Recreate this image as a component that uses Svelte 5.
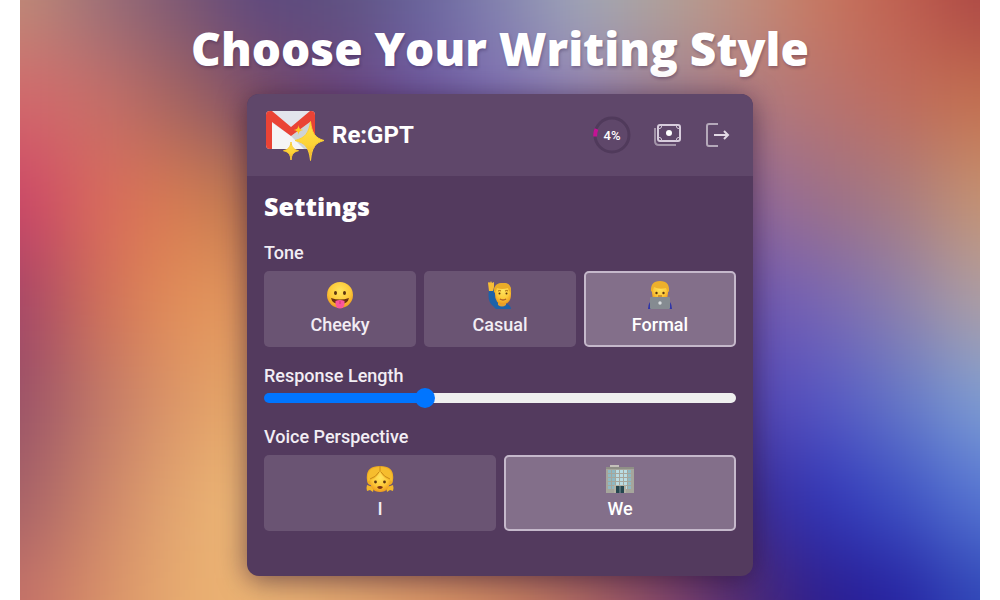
<script>
  // Colour field behind the card: one row of stops per 100 units of height.
  const field = [
    'c08c78 9c7078 7c5874 5c4880 5e5280 68649c 8484b0 a0a8b8 b0a49c c09080 c87860 c06050 ac4644',
    'd4686c c87068 a46460 7c4c68 6c4480 7058a0 8070b4 9484b4 a07e90 b07c80 b87470 c06c5c c4704e',
    'cc4468 da6a5c d87c50 b87850 805070 70509c 7060b0 8068ac 806890 9068a0 9c7088 a87c80 c89470',
    'a44468 d07058 e49058 e09860 a06858 805070 705090 705090 705090 6c54b0 7866b4 8c80ac b0a0a4',
    '985068 c07868 de9868 e8ac68 c08860 a07060 906068 805070 604880 5444b0 5656c4 6478c8 80a0d4',
    'a46068 cc8468 e4a870 f0bc78 dca068 cc8860 b07060 986068 784870 3c2c90 3034b8 3c50c4 5878d4',
    'c47068 d89068 e8ac70 ecb474 e4a870 dc9868 cc8460 b06860 884868 542c70 2c1c8c 2420a0 3048b8'
  ].map((row) => row.split(' '));

  const cells = [];
  for (let r = -1; r <= field.length; r++) {
    for (let c = -1; c <= field[0].length; c++) {
      const row = field[Math.min(Math.max(r, 0), field.length - 1)];
      const fill = row[Math.min(Math.max(c, 0), row.length - 1)];
      cells.push({ x: c * 80 - 40, y: r * 100 - 50, fill: '#' + fill });
    }
  }

  let tone = $state('Formal');
  let voice = $state('We');
  let length = $state(1);
</script>

{#snippet face(name)}
  <svg class="emoji" viewBox="0 0 28 28" aria-hidden="true">
    {#if name === 'Cheeky'}
      <circle cx="14" cy="14" r="13" fill="url(#skin)" />
      <ellipse cx="9.5" cy="12" rx="1.5" ry="2.1" fill="#5b3510" />
      <ellipse cx="18.5" cy="12" rx="1.5" ry="2.1" fill="#5b3510" />
      <path d="M5 17q9 3 18 0-1 6-9 6t-9-6z" fill="#6b3012" />
      <path d="M9.500 20q4.500-2 9 0v3a4.500 4.500 0 0 1-9 0z" fill="#f9569b" />
      <path d="M14 20v3" stroke="#d82f78" stroke-width="1" />
    {:else if name === 'Casual'}
      <path d="M3 9Q1 20 7 25l3 3h15q0-5-8-6l-7-3-2-10z" fill="#1d62a9" />
      <path d="M3 10L2 2q1-2 2 0l1-2 1 2 2-1v5l-1 4z" fill="#f7bd36" />
      <path d="M12 20h8v4q-4 3-8 0z" fill="#e6a02d" />
      <path d="M9 8q1-6 8-6t8 6v5q0 10-8 10T9 13z" fill="url(#skin)" />
      <path d="M8 12Q7 2 16 2q10-1 9 10-2-1-3-5-6 2-11 0-1 4-3 5z" fill="#e9ac28" />
      <path d="M12 10q2-1 3 0m4 0q2-1 3 0" stroke="#a86815" fill="none" />
      <circle cx="13.500" cy="12.500" r="1" fill="#593512" />
      <circle cx="20.500" cy="12.500" r="1" fill="#593512" />
      <path d="M14 18q3 2 6 0" stroke="#ae5f25" fill="none" stroke-width="1.500" />
    {:else if name === 'Formal'}
      <path d="M2 28q0-8 6-9h12q6 1 6 9z" fill="#3036a8" />
      <path d="M6 8q0-7 8-7t8 7v4q0 8-8 8t-8-8z" fill="url(#skin)" />
      <path d="M5 11Q4 0 14 0t9 11q-2-1-3-4-7 2-12-1-1 4-3 5z" fill="#eeb02c" />
      <circle cx="10.500" cy="12" r="1.200" fill="#593512" />
      <circle cx="17.500" cy="12" r="1.200" fill="#593512" />
      <path d="M12 15h4" stroke="#a85d22" />
      <rect x="4" y="16" width="20" height="12" rx="1" fill="#858b91" />
      <circle cx="14" cy="22" r="1.700" fill="#d9dde0" />
    {:else if name === 'I'}
      <path d="M1 15Q-1 1 14 1t13 14q0 4-3 5H4q-3-1-3-5z" fill="#efad22" />
      <path d="M4 21l-3-1q-1 3 0 6l3-1 3 2 1-5zM24 21l3-1q1 3 0 6l-3-1-3 2-1-5z" fill="#f2b72a" />
      <path d="M4 14q0-9 10-9t10 9q0 13-10 13T4 14z" fill="url(#skin)" />
      <path d="M2 16Q0 2 14 2t12 14Q17 14 14 6 11 14 2 16z" fill="#f6bd2e" />
      <path d="M14 1v6M4 14q6-2 9-7m11 7q-6-2-9-7" stroke="#c98a18" fill="none" />
      <circle cx="9.500" cy="17" r="1.400" fill="#593512" />
      <circle cx="18.500" cy="17" r="1.400" fill="#593512" />
      <path d="M11 22q3-2 6 0-1 2-3 2t-3-2z" fill="#7c3514" />
    {:else}
      <path d="M4 0h9v3H4z" fill="#c4c0ba" />
      <path d="M0 2h28v26H0z" fill="#a6a69c" />
      <path d="M0 2h28v2H0z" fill="#8f8f86" />
      {#each [5, 9, 13, 17, 21] as y}
        {#each [2, 6, 10, 14, 18, 22] as x}
          <rect {x} {y} width="3" height="3" fill={x > 9 && x < 19 ? '#b9dce3' : '#8fb9c3'} />
        {/each}
      {/each}
      <path d="M8 20h12v8H8z" fill="#b4b2a5" />
      <path d="M10 21h8v7h-8z" fill="#24464f" />
      <path d="M14 21v7" stroke="#82979a" />
    {/if}
  </svg>
{/snippet}

<div class="page">
  <svg class="backdrop" viewBox="0 0 960 600" preserveAspectRatio="none" aria-hidden="true">
    <defs>
      <filter id="melt" filterUnits="userSpaceOnUse" x="-120" y="-150" width="1200" height="900" color-interpolation-filters="sRGB">
        <feGaussianBlur stdDeviation="36 42" />
      </filter>
      <radialGradient id="skin" cx="50%" cy="35%" r="65%">
        <stop offset="0" stop-color="#ffe45e" />
        <stop offset=".6" stop-color="#fdca3a" />
        <stop offset="1" stop-color="#ee9c1f" />
      </radialGradient>
    </defs>
    <g filter="url(#melt)">
      {#each cells as cell}
        <rect x={cell.x} y={cell.y} width="81" height="101" fill={cell.fill} />
      {/each}
    </g>
  </svg>

  <h1>Choose Your Writing Style</h1>

  <main class="card">
    <header>
      <svg class="logo" viewBox="0 -2 59 52" aria-hidden="true">
        <defs>
          <linearGradient id="gold" x1="0" y1="0" x2="0" y2="1">
            <stop offset="0" stop-color="#ffe34a" />
            <stop offset=".6" stop-color="#fdd235" />
            <stop offset="1" stop-color="#f0a92a" />
          </linearGradient>
        </defs>
        <rect x="1" y="0" width="49" height="38" rx="4" fill="#e3e4ec" />
        <path d="M7 12L26 25 45 11v27H7z" fill="#f5f5f5" />
        <path d="M26 25L45 11v27h-6z" fill="#cfd3d5" />
        <path d="M1 4v30q0 4 4 4h2V11l19 14 19-14v27h1q4 0 4-4V4q0-4-4-4h-1L26 16 7 0H5Q1 0 1 4z" fill="#ea4335" />
        <path d="M45.500 10.500C47 22 50 27 59 29.500 50 32 47 36 45.500 49.500 44 36 40 32 30 29.500 40 27 44 22 45.500 10.500z" fill="url(#gold)" stroke="#fccf35" />
        <path d="M26 31C26.700 36 28.500 38.500 33.500 39.700 28.500 41 26.700 43 26 49 25.300 43 23.500 41 18.500 39.700 23.500 38.500 25.300 36 26 31z" fill="url(#gold)" stroke="#fccb32" />
        <path d="M33.500 14C34 17.500 35 18.500 38.500 19 35 19.500 34 20.500 33.500 24 33 20.500 32 19.500 28.500 19 32 18.500 33 17.500 33.500 14z" fill="#ffc928" />
      </svg>
      <span class="brand">Re:GPT</span>
      <div class="usage">
        <svg viewBox="0 0 38 38" aria-hidden="true">
          <circle cx="19" cy="19" r="17" fill="none" stroke="#503a5b" stroke-width="3" />
          <path d="M2.200 20.500A17 17 0 0 1 3.500 13" fill="none" stroke="#c41395" stroke-width="4" />
        </svg>
        <span>4%</span>
      </div>
      <button class="tool" aria-label="Billing">
        <svg viewBox="0 0 28 24" fill="none">
          <path d="M2 5v13q0 4 4 4h17" stroke="#a496aa" stroke-width="2" />
          <rect x="5" y="2" width="22" height="16" rx="2" stroke="#d8cddd" stroke-width="2" />
          <path d="M5 6q4 0 4-4m14 0q0 4 4 4m0 8q-4 0-4 4M9 18q0-4-4-4" stroke="#cfc4d4" />
          <circle cx="16" cy="10" r="3" fill="#fff" />
        </svg>
      </button>
      <button class="tool" aria-label="Sign out">
        <svg viewBox="0 0 28 24" fill="none">
          <path d="M15 1H6Q4 1 4 3v18q0 2 2 2h9" stroke="#b5a9ba" stroke-width="2" />
          <path d="M11 12h14M21 8l4 4-4 4" stroke="#e2d9e5" stroke-width="2" />
        </svg>
      </button>
    </header>

    <section class="settings">
      <h2>Settings</h2>

      <div class="group" role="group" aria-labelledby="tone-label">
        <div class="label" id="tone-label">Tone</div>
        <div class="choices">
          {#each ['Cheeky', 'Casual', 'Formal'] as option}
            <button class="choice" class:selected={tone === option} aria-pressed={tone === option} onclick={() => (tone = option)}>
              {@render face(option)}
              {option}
            </button>
          {/each}
        </div>
      </div>

      <div class="group">
        <label class="label" for="length">Response Length</label>
        <input id="length" type="range" min="0" max="3" bind:value={length} style:--part={length / 3} />
      </div>

      <div class="group" role="group" aria-labelledby="voice-label">
        <div class="label" id="voice-label">Voice Perspective</div>
        <div class="choices">
          {#each ['I', 'We'] as option}
            <button class="choice" class:selected={voice === option} aria-pressed={voice === option} onclick={() => (voice = option)}>
              {@render face(option)}
              {option}
            </button>
          {/each}
        </div>
      </div>
    </section>
  </main>
</div>

<style>
  :global(body) {
    margin: 0;
    background: #fff;
  }

  .page {
    position: relative;
    box-sizing: border-box;
    min-height: 100vh;
    margin: 0 20px;
    padding: 16px 16px 24px;
    overflow: hidden;
    display: flex;
    flex-direction: column;
    align-items: center;
    gap: 14px;
    color: #fff;
    font-family: Roboto, "Liberation Sans", sans-serif;
  }

  .backdrop {
    position: absolute;
    inset: 0;
    width: 100%;
    height: 100%;
    z-index: -1;
  }

  h1 {
    margin: 0;
    font-family: "Open Sans", "Noto Sans", sans-serif;
    font-size: 46px;
    line-height: 64px;
    font-weight: 800;
    text-align: center;
    text-shadow: 1px 2px 3px rgb(40 20 60 / 30%);
  }

  .card {
    box-sizing: border-box;
    width: 100%;
    max-width: 506px;
    border-radius: 12px;
    background: #533a5e;
    box-shadow: 0 4px 28px rgb(40 15 45 / 60%);
    overflow: hidden;
  }

  header {
    display: flex;
    align-items: center;
    padding: 15px 22px 15px 18px;
    background: #5f476a;
  }

  .logo {
    width: 59px;
    height: 52px;
  }

  .brand {
    flex: 1;
    margin-left: 8px;
    font-size: 24px;
    line-height: 32px;
    font-weight: 700;
  }

  .usage {
    display: grid;
    place-items: center;
    font-size: 13px;
    font-weight: 500;
  }

  .usage > * {
    grid-area: 1 / 1;
  }

  .usage svg {
    width: 38px;
    height: 38px;
  }

  .tool {
    margin: 0 0 0 22px;
    padding: 0;
    border: 0;
    background: none;
    cursor: pointer;
  }

  .tool svg {
    display: block;
    width: 28px;
    height: 24px;
  }

  .settings {
    display: flex;
    flex-direction: column;
    gap: 17px;
    padding: 14px 17px 45px;
  }

  h2 {
    margin: 0 0 2px;
    font-family: "Open Sans", "Noto Sans", sans-serif;
    font-size: 25px;
    line-height: 32px;
    font-weight: 800;
  }

  .group {
    display: flex;
    flex-direction: column;
    gap: 6px;
  }

  .label {
    font-size: 18px;
    line-height: 24px;
    font-weight: 500;
    color: #f2edf4;
  }

  .choices {
    display: flex;
    gap: 8px;
  }

  .choice {
    flex: 1 1 0;
    display: flex;
    flex-direction: column;
    align-items: center;
    gap: 2px;
    padding: 8px 8px 6px;
    border: 2px solid transparent;
    border-radius: 5px;
    background: #6a5473 border-box;
    color: #f2edf4;
    font: 500 18px/28px Roboto, "Liberation Sans", sans-serif;
    cursor: pointer;
  }

  .choice.selected {
    border-color: #c5b8cb;
    background-color: #836f8a;
    color: #fff;
  }

  .emoji {
    width: 28px;
    height: 28px;
  }

  input {
    appearance: none;
    width: 100%;
    height: 20px;
    margin: -6px 0 0;
    background: none;
    cursor: pointer;
  }

  input::-webkit-slider-runnable-track {
    height: 10px;
    border-radius: 5px;
    background: linear-gradient(#0075ff, #0075ff) 0 0 / calc(10px + (100% - 20px) * var(--part)) 100% no-repeat #efefef;
  }

  input::-webkit-slider-thumb {
    appearance: none;
    width: 20px;
    height: 20px;
    margin-top: -5px;
    border-radius: 50%;
    background: #0075ff;
  }
</style>
